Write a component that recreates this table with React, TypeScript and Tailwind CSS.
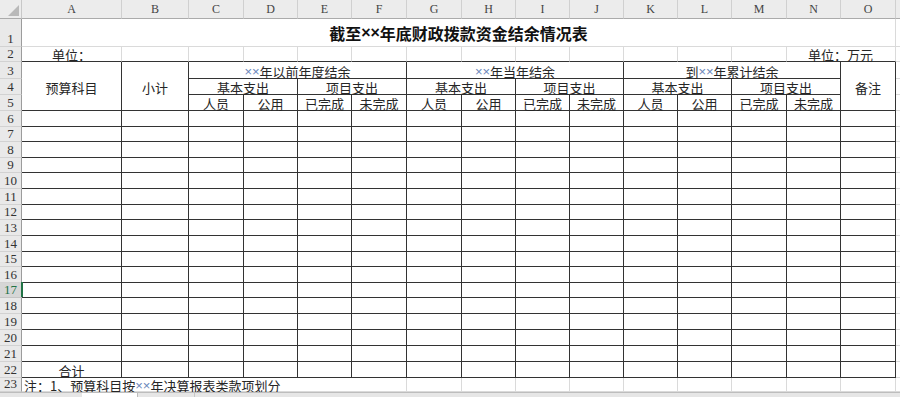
import React from 'react';

const letters = ['A', 'B', 'C', 'D', 'E', 'F', 'G', 'H', 'I', 'J', 'K', 'L', 'M', 'N', 'O'];
const row2Blank = ['B', 'C', 'D', 'E', 'F', 'G', 'H', 'I', 'J', 'K', 'L', 'M'];
const row23Blank = ['G', 'H', 'I', 'J', 'K', 'L', 'M', 'N', 'O'];

const TB = 'border-r border-b border-[#333333] flex items-center justify-center pt-[2px] leading-[13px] whitespace-nowrap overflow-visible';
const GL = 'border-r border-b border-[#dadada]';
const GLB = 'border-r border-b border-r-[#dadada] border-b-[#333333]';
const EXTRA = 'border-b border-[#dadada]';

function X() {
  return <span className="text-[#6a86ba] font-['Liberation_Sans',sans-serif] text-[13px]">××</span>;
}

function RH({ n, active }: { n: number; active?: boolean }) {
  if (active) {
    return (
      <div className="bg-[#d6d6d6] border-r border-b border-r-[#9c9c9c] border-b-[#c4c4c4] flex items-end justify-center text-[#217346] font-['Liberation_Serif',serif] text-[13px] leading-[14px]">
        {n}
      </div>
    );
  }
  return (
    <div className="bg-[#e9e9e9] border-r border-b border-r-[#9c9c9c] border-b-[#d2d2d2] flex items-end justify-center text-[#333] font-['Liberation_Serif',serif] text-[13px] leading-[14px]">
      {n}
    </div>
  );
}

const bodyRows = [6, 7, 8, 9, 10, 11, 12, 13, 14, 15, 16, 17, 18, 19, 20, 21, 22];

export default function App() {
  return (
    <div className="w-[900px] h-[397px] bg-white overflow-hidden font-['Noto_Sans_CJK_SC',sans-serif] text-[13px] text-[#262626] flex flex-col">
      <div className="grid grid-cols-[22px_100px_67px_55px_54px_54px_55px_55px_54px_54px_54px_54px_54px_55px_54px_55px_1fr] grid-rows-[19px_28px_15px_17px_16px_16px_16px_15px_16px_15px_16px_16px_15px_16px_16px_15px_16px_15px_16px_16px_16px_16px_16px_14px]">
        {/* column headers */}
        <div className="bg-[#ececec] border-r border-b border-r-[#c8c8c8] border-b-[#ababab] relative">
          <svg className="absolute right-[2px] bottom-[2px]" width="11" height="11" viewBox="0 0 11 11">
            <polygon points="11,0 11,11 0,11" fill="#b9b9b9" />
          </svg>
        </div>
        {letters.map((l) => (
          <div
            key={l}
            className="bg-[#ececec] border-r border-b border-r-[#d0d0d0] border-b-[#ababab] flex items-center justify-center font-['Liberation_Serif',serif] text-[12px] text-[#444]"
          >
            {l}
          </div>
        ))}
        <div className="bg-[#ececec] border-b border-b-[#ababab]" />

        {/* row 1 */}
        <RH n={1} />
        <div className="col-span-15 border-r border-b border-[#dadada] flex items-center justify-center font-bold text-[16px] text-[#111]">
          截至<span className="font-['Liberation_Sans',sans-serif] text-[16px]">××</span>年底财政拨款资金结余情况表
        </div>
        <div className={EXTRA} />

        {/* row 2 */}
        <RH n={2} />
        <div className={GLB + ' flex items-center justify-center leading-[13px] pt-[1px]'}>单位：</div>
        {row2Blank.map((c) => (
          <div key={c} className={GLB} />
        ))}
        <div className={GLB + ' col-span-2 flex items-center justify-end pr-[22px] leading-[13px] pt-[1px] whitespace-nowrap'}>
          单位：万元
        </div>
        <div className={EXTRA} />

        {/* row 3 */}
        <RH n={3} />
        <div className={TB + ' row-span-3'}>预算科目</div>
        <div className={TB + ' row-span-3'}>小计</div>
        <div className={TB + ' col-span-4'}>
          <X />年以前年度结余
        </div>
        <div className={TB + ' col-span-4'}>
          <X />年当年结余
        </div>
        <div className={TB + ' col-span-4'}>
          到<X />年累计结余
        </div>
        <div className={TB + ' row-span-3'}>备注</div>
        <div className={EXTRA} />

        {/* row 4 */}
        <RH n={4} />
        <div className={TB + ' col-span-2'}>基本支出</div>
        <div className={TB + ' col-span-2'}>项目支出</div>
        <div className={TB + ' col-span-2'}>基本支出</div>
        <div className={TB + ' col-span-2'}>项目支出</div>
        <div className={TB + ' col-span-2'}>基本支出</div>
        <div className={TB + ' col-span-2'}>项目支出</div>
        <div className={EXTRA} />

        {/* row 5 */}
        <RH n={5} />
        {[0, 1, 2].map((g) => (
          <React.Fragment key={g}>
            <div className={TB}>人员</div>
            <div className={TB}>公用</div>
            <div className={TB}>已完成</div>
            <div className={TB}>未完成</div>
          </React.Fragment>
        ))}
        <div className={EXTRA} />

        {/* body rows */}
        {bodyRows.map((r) => (
          <React.Fragment key={r}>
            <RH n={r} active={r === 17} />
            {letters.map((l) => {
              if (l === 'A' && r === 22) {
                return (
                  <div key={l} className={TB}>
                    合计
                  </div>
                );
              }
              if (l === 'A' && r === 17) {
                return (
                  <div key={l} className={TB + ' relative'}>
                    <div className="absolute left-[-1px] top-[-1px] bottom-0 w-[2px] bg-[#217346]" />
                  </div>
                );
              }
              return <div key={l} className={TB} />;
            })}
            <div className={EXTRA} />
          </React.Fragment>
        ))}

        {/* row 23 */}
        <RH n={23} />
        <div className={GL + ' col-span-6 flex items-center pl-[2px] pt-[1px] leading-[13px] whitespace-nowrap'}>
          注：1、预算科目按<X />年决算报表类款项划分
        </div>
        {row23Blank.map((c) => (
          <div key={c} className={GL} />
        ))}
        <div className={EXTRA} />
      </div>

      {/* bottom strip */}
      <div className="flex-1 flex border-t border-[#bdbdbd] bg-[#e6e6e6]">
        <div className="w-[82px]" />
        <div className="w-[56px] bg-white border-r border-[#bdbdbd]" />
        <div className="w-[57px] border-r border-[#c6c6c6]" />
        <div className="flex-1" />
      </div>
    </div>
  );
}
